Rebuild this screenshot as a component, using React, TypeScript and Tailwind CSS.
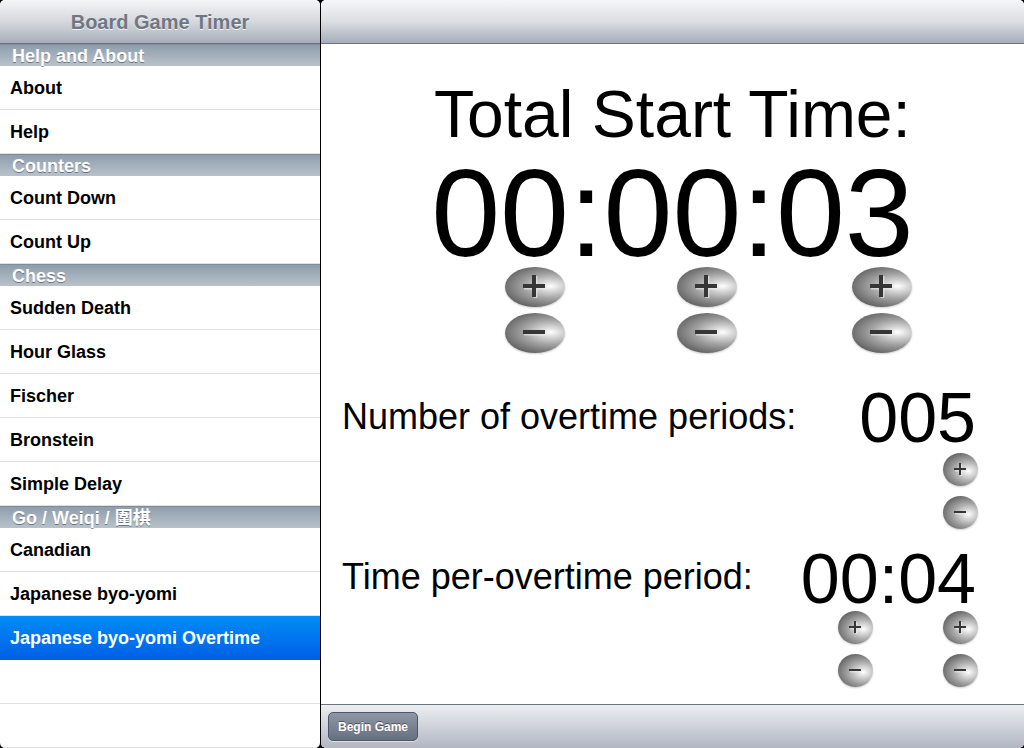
import React from 'react';

type Row = { label: string; header?: boolean; selected?: boolean };

const rows: Row[] = [
  { label: 'Help and About', header: true },
  { label: 'About' },
  { label: 'Help' },
  { label: 'Counters', header: true },
  { label: 'Count Down' },
  { label: 'Count Up' },
  { label: 'Chess', header: true },
  { label: 'Sudden Death' },
  { label: 'Hour Glass' },
  { label: 'Fischer' },
  { label: 'Bronstein' },
  { label: 'Simple Delay' },
  { label: 'Go / Weiqi / 圍棋', header: true },
  { label: 'Canadian' },
  { label: 'Japanese byo-yomi' },
  { label: 'Japanese byo-yomi Overtime', selected: true },
  { label: '' },
  { label: '' },
];

function Glyph({ minus, size, stroke }: { minus?: boolean; size: number; stroke: number }) {
  const c = size / 2;
  return (
    <svg width={size + 2} height={size + 2} viewBox={`0 0 ${size + 2} ${size + 2}`}>
      <g stroke="#f0f0f0" strokeWidth={stroke} opacity="0.6">
        <line x1={1} y1={c + 1.5} x2={size + 1} y2={c + 1.5} />
        {!minus && <line x1={c + 1.5} y1={1} x2={c + 1.5} y2={size + 1} />}
      </g>
      <g stroke="#363636" strokeWidth={stroke}>
        <line x1={0} y1={c} x2={size} y2={c} />
        {!minus && <line x1={c} y1={0} x2={c} y2={size} />}
      </g>
    </svg>
  );
}

function BigButton({ minus }: { minus?: boolean }) {
  return (
    <div className="w-[60px] h-[40px] rounded-[50%] flex items-center justify-center bg-[radial-gradient(ellipse_at_76%_48%,#ffffff_0%,#dedede_14%,#a2a2a2_42%,#6c6c6c_72%,#424242_100%)] shadow-[0_1px_2px_rgba(0,0,0,0.2)]">
      <Glyph minus={minus} size={22} stroke={4} />
    </div>
  );
}

function SmallButton({ minus }: { minus?: boolean }) {
  return (
    <div className="w-[35px] h-[33px] rounded-[50%] flex items-center justify-center bg-[radial-gradient(ellipse_at_72%_55%,#ffffff_0%,#dcdcdc_16%,#a0a0a0_45%,#686868_75%,#444444_100%)] shadow-[0_1px_2px_rgba(0,0,0,0.2)]">
      <Glyph minus={minus} size={12} stroke={2} />
    </div>
  );
}

function SmallPair() {
  return (
    <div className="flex flex-col gap-[10px]">
      <SmallButton />
      <SmallButton minus />
    </div>
  );
}

export default function App() {
  return (
    <div
      className="w-[1024px] h-[748px] bg-black flex gap-px overflow-hidden"
      style={{ fontFamily: '"Liberation Sans", Arial, "Noto Sans CJK TC", sans-serif' }}
    >
      {/* master list */}
      <div className="w-[320px] h-full bg-white rounded-[5px] overflow-hidden flex flex-col">
        <div className="h-[44px] shrink-0 flex items-center justify-center bg-gradient-to-b from-[#f4f5f7] via-[#d5d8de] to-[#a8aeba] border-b border-[#6d7382]">
          <span className="text-[20px] font-bold text-[#707782] [text-shadow:0_1px_0_rgba(255,255,255,0.8)]">
            Board Game Timer
          </span>
        </div>
        {rows.map((r, i) =>
          r.header ? (
            <div
              key={i}
              className="h-[22px] shrink-0 flex items-center px-[12px] bg-gradient-to-b from-[#8f9eac] to-[#b9c2cb] border-t border-[#7f8d9b]"
            >
              <span className="text-[18px] font-bold leading-none text-white [text-shadow:0_1px_0_rgba(60,70,80,0.6)]">
                {r.label}
              </span>
            </div>
          ) : (
            <div
              key={i}
              className={
                r.selected
                  ? 'h-[44px] shrink-0 flex items-center px-[10px] bg-gradient-to-b from-[#058cf5] to-[#015ee6]'
                  : 'h-[44px] shrink-0 flex items-center px-[10px] border-b border-[#e0e0e0]'
              }
            >
              <span className={r.selected ? 'text-[18px] font-bold text-white pt-px' : 'text-[18px] font-bold text-black pt-px'}>
                {r.label}
              </span>
            </div>
          )
        )}
      </div>

      {/* detail */}
      <div className="flex-1 h-full bg-white rounded-[5px] overflow-hidden flex flex-col">
        <div className="h-[44px] shrink-0 bg-gradient-to-b from-[#f5f6f8] via-[#dcdee3] to-[#a6acb9] border-b border-[#6d7382]" />

        <div className="flex-1 flex flex-col text-black">
          <div className="mt-[37px] text-center text-[66px] leading-[66px]">Total Start Time:</div>
          <div className="mt-[16px] text-center text-[124px] leading-[100px]">00:00:03</div>

          <div className="mt-[4px] flex pl-[184px]">
            <div className="flex flex-col gap-[6px]">
              <BigButton />
              <BigButton minus />
            </div>
            <div className="ml-[112px] flex flex-col gap-[6px]">
              <BigButton />
              <BigButton minus />
            </div>
            <div className="ml-[115px] flex flex-col gap-[6px]">
              <BigButton />
              <BigButton minus />
            </div>
          </div>

          <div className="mt-[32px] flex pl-[21px] pr-[46px]">
            <div className="mt-[14px] flex-1 text-[36px] leading-[36px]">Number of overtime periods:</div>
            <div className="flex flex-col items-end">
              <div className="mr-[2px] text-[70px] leading-[66px]">005</div>
              <div className="mt-[2px]">
                <SmallPair />
              </div>
            </div>
          </div>

          <div className="mt-[17px] flex pl-[21px] pr-[46px]">
            <div className="mt-[13px] flex-1 text-[36px] leading-[36px]">Time per-overtime period:</div>
            <div className="flex flex-col items-end">
              <div className="mr-[2px] text-[70px] leading-[66px]">00:04</div>
              <div className="-mt-[1px] flex gap-[70px]">
                <SmallPair />
                <SmallPair />
              </div>
            </div>
          </div>
        </div>

        <div className="h-[44px] shrink-0 flex items-center px-[7px] bg-gradient-to-b from-[#eceef1] to-[#b1b6c2] border-t border-[#6d7382]">
          <button className="h-[29px] px-[9px] rounded-[5px] border border-[#4f5766] bg-gradient-to-b from-[#8f97a4] to-[#677080] text-[12px] font-bold text-white [text-shadow:0_-1px_0_rgba(0,0,0,0.4)] shadow-[0_1px_0_rgba(255,255,255,0.5)]">
            Begin Game
          </button>
        </div>
      </div>
    </div>
  );
}
